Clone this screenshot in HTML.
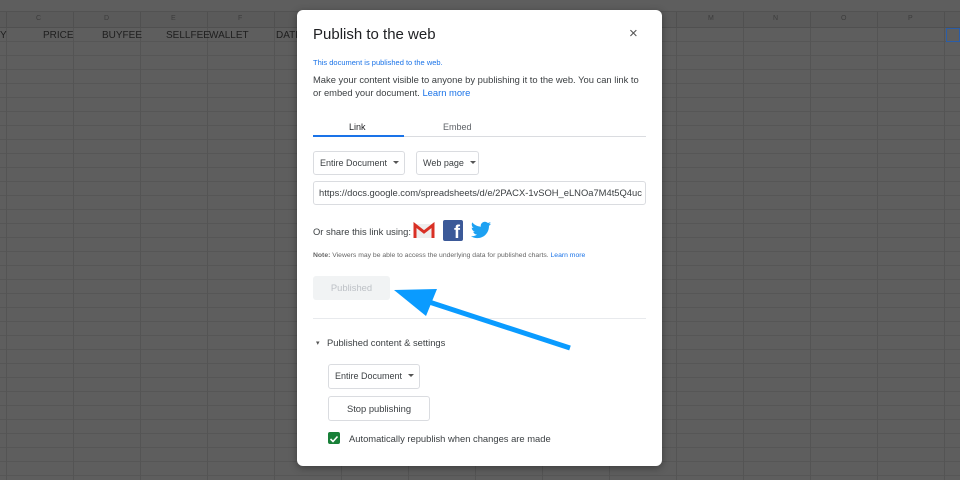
<!DOCTYPE html><html style="background:#5e5e5e;color-scheme:only light"><head><meta name="color-scheme" content="only light"><style>
*{margin:0;padding:0;box-sizing:border-box;forced-color-adjust:none;-webkit-print-color-adjust:exact;print-color-adjust:exact}
body{width:960px;height:480px;overflow:hidden;position:relative;background-color:#5e5e5e;font-family:"Liberation Sans",Arial,sans-serif}
.bg{position:absolute;left:0;top:0;width:0;height:0;border-style:solid;border-color:#5e5e5e;border-width:240px 480px}
.grid{position:absolute;left:0;top:28px;width:960px;height:452px;background:
repeating-linear-gradient(90deg,#545454 0 1px,transparent 1px 67px),
repeating-linear-gradient(180deg,transparent 0 13px,#565656 13px 14px);background-position:6px 0,0 0}
.hdr{position:absolute;left:0;top:11px;width:960px;height:17px;background-color:#5a5a5a;border-top:1px solid #525252;border-bottom:1px solid #505050;background-image:repeating-linear-gradient(90deg,#505050 0 1px,transparent 1px 67px);background-position:6px 0}
.a{position:absolute;font-size:7px;color:#3c3c3c}
.c{position:absolute;font-size:10px;color:#1e1e1e;top:30px}
.dlg{position:absolute;left:297px;top:10px;width:365px;height:456px;background:#fff;border-radius:6px;box-shadow:0 2px 8px rgba(0,0,0,.35)}
.t{position:absolute;color:#3c4043}
.btn{position:absolute;border:1px solid #dadce0;border-radius:3px;font-size:9px;color:#3c4043;padding-left:6px;line-height:22px;background:#fff}
.car{display:inline-block;border-left:3px solid transparent;border-right:3px solid transparent;border-top:3px solid #555;margin-left:6px;vertical-align:2px}
a{color:#1a73e8;text-decoration:none}
</style></head><body>
<svg style="position:absolute;left:0;top:0" width="960" height="480"><rect width="960" height="480" fill="#5e5e5e"/></svg>
<div class="bg"></div>
<div class="hdr"></div>
<div class="grid"></div>
<div class="a" style="left:36px;top:15px">C</div><div class="a" style="left:104px;top:15px">D</div><div class="a" style="left:171px;top:15px">E</div><div class="a" style="left:238px;top:15px">F</div>
<div class="a" style="left:708px;top:15px">M</div><div class="a" style="left:773px;top:15px">N</div><div class="a" style="left:841px;top:15px">O</div><div class="a" style="left:908px;top:15px">P</div>
<div class="c" style="left:0">Y</div><div class="c" style="left:43px">PRICE</div><div class="c" style="left:102px">BUYFEE</div><div class="c" style="left:166px">SELLFEE</div><div class="c" style="left:209px">WALLET</div><div class="c" style="left:276px">DATE</div>
<div style="position:absolute;left:946px;top:28px;width:14px;height:14px;border:1px solid #2a5da8"></div>
<div class="dlg">
<div class="t" style="left:16px;top:16px;font-size:15px;color:#202124">Publish to the web</div>
<div class="t" style="left:332px;top:15px;font-size:15px;color:#555">×</div>
<div class="t" style="left:16px;top:48px;font-size:7.5px;color:#1a73e8">This document is published to the web.</div>
<div class="t" style="left:16px;top:63px;font-size:9.4px;line-height:13px;width:332px">Make your content visible to anyone by publishing it to the web. You can link to or embed your document. <a>Learn more</a></div>
<div class="t" style="left:52px;top:112px;font-size:9px;color:#202124">Link</div>
<div class="t" style="left:146px;top:112px;font-size:9px;color:#5f6368">Embed</div>
<div style="position:absolute;left:16px;top:126px;width:333px;height:1px;background:#dadce0"></div>
<div style="position:absolute;left:16px;top:125px;width:91px;height:2px;background:#1a73e8"></div>
<div class="btn" style="left:16px;top:141px;width:92px;height:24px">Entire Document<span class="car"></span></div>
<div class="btn" style="left:119px;top:141px;width:63px;height:24px">Web page<span class="car"></span></div>
<div class="btn" style="left:16px;top:171px;width:333px;height:24px;overflow:hidden;white-space:nowrap;padding-left:5px;font-size:9.4px">https://docs.google.com/spreadsheets/d/e/2PACX-1vSOH_eLNOa7M4t5Q4uc</div>
<div class="t" style="left:16px;top:216px;font-size:9.4px">Or share this link using:</div>
<svg style="position:absolute;left:116px;top:212px" width="22" height="18" viewBox="0 0 22 18"><rect x="1" y="2" width="20" height="14" fill="#eee"/><path d="M2 16V3l9 7 9-7v13" fill="none" stroke="#d93025" stroke-width="3"/></svg>
<div style="position:absolute;left:146px;top:210px;width:20px;height:21px;background:#3b5998;border-radius:2px;color:#fff;font-weight:bold;font-size:18px;text-align:right;padding-right:3px;line-height:24px;overflow:hidden">f</div>
<svg style="position:absolute;left:173px;top:211px" width="22" height="19" viewBox="0 0 24 20"><path d="M23 2.5c-.8.4-1.7.6-2.6.7.9-.6 1.6-1.4 2-2.5-.9.5-1.9.9-2.9 1.1C18.6.9 17.4.4 16.2.4c-2.5 0-4.5 2-4.5 4.5 0 .4 0 .7.1 1C8 5.7 4.7 3.9 2.5 1.2c-.4.7-.6 1.4-.6 2.3 0 1.6.8 2.9 2 3.8-.7 0-1.4-.2-2-.6v.1c0 2.2 1.6 4 3.6 4.4-.4.1-.8.2-1.2.2-.3 0-.6 0-.8-.1.6 1.8 2.2 3.1 4.2 3.1-1.5 1.2-3.5 1.9-5.6 1.9H1c2 1.3 4.4 2 6.9 2 8.3 0 12.8-6.9 12.8-12.8v-.6c.9-.6 1.6-1.4 2.3-2.4z" fill="#1da1f2"/></svg>
<div class="t" style="left:16px;top:242px;font-size:6.8px;color:#666"><b>Note:</b> Viewers may be able to access the underlying data for published charts. <a>Learn more</a></div>
<div style="position:absolute;left:16px;top:266px;width:77px;height:24px;background:#f1f3f4;border-radius:3px;color:#bdc1c6;font-size:9.4px;text-align:center;line-height:24px">Published</div>
<div style="position:absolute;left:16px;top:308px;width:333px;height:1px;background:#e8eaed"></div>
<div class="t" style="left:19px;top:329px;font-size:7px;color:#555">▾</div>
<div class="t" style="left:30px;top:327px;font-size:9.4px">Published content &amp; settings</div>
<div class="btn" style="left:31px;top:354px;width:92px;height:25px;line-height:23px">Entire Document<span class="car"></span></div>
<div class="btn" style="left:31px;top:386px;width:102px;height:25px;line-height:23px;text-align:center;padding:0;font-size:9.4px">Stop publishing</div>
<div style="position:absolute;left:31px;top:422px;width:12px;height:12px;background:#188038;border-radius:2px"><svg width="12" height="12"><path d="M2.5 6l2.5 2.5 4.5-5" stroke="#fff" stroke-width="1.6" fill="none"/></svg></div>
<div class="t" style="left:52px;top:423px;font-size:9.4px">Automatically republish when changes are made</div>
</div>
<svg style="position:absolute;left:0;top:0" width="960" height="480"><line x1="570" y1="348" x2="420" y2="299" stroke="#0a9bff" stroke-width="5"/><polygon points="394,290 437,289 426,316" fill="#0a9bff"/></svg>
</body></html>
